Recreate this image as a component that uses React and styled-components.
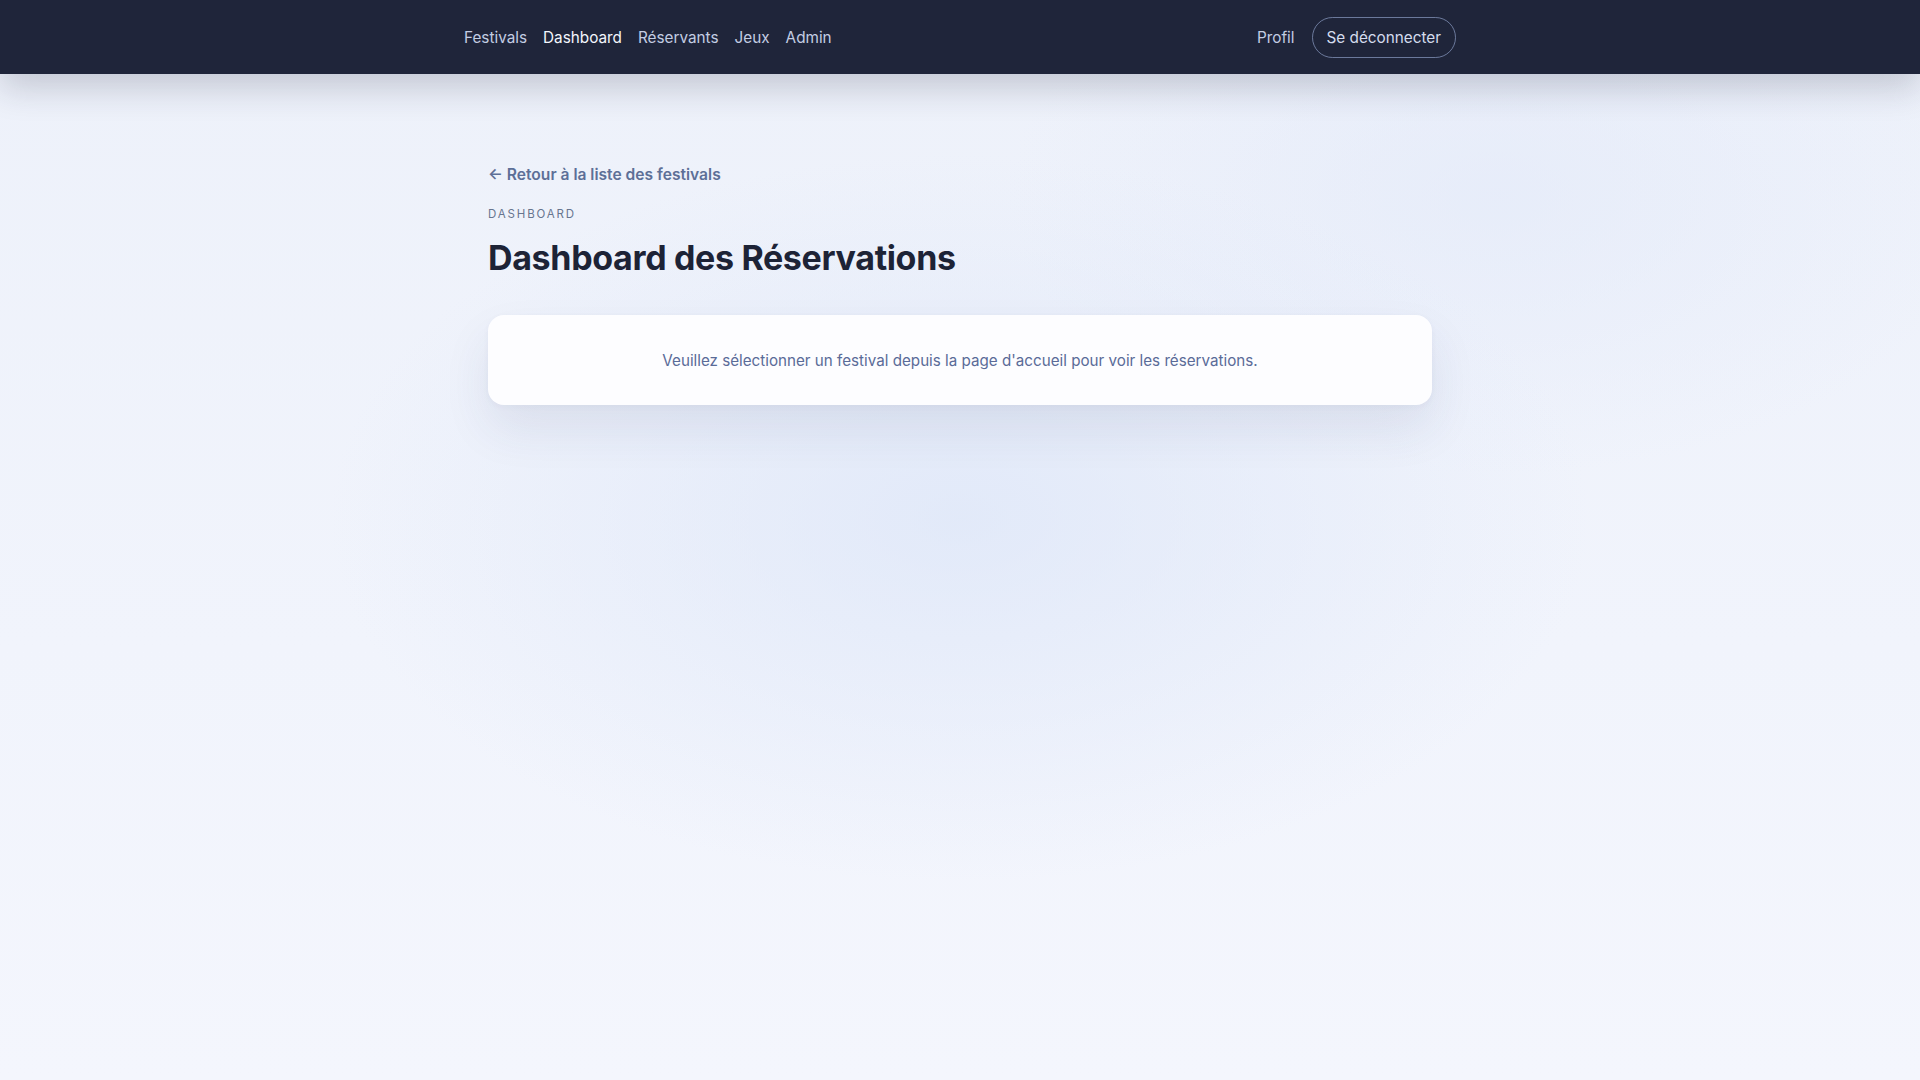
import React from "react";
import styled, { createGlobalStyle } from "styled-components";

const GlobalStyle = createGlobalStyle`
  * { box-sizing: border-box; }
  html, body { margin: 0; padding: 0; }
  body {
    font-family: Inter, "Noto Sans", "Liberation Sans", sans-serif;
    background: #eff3fb;
  }
`;

const Page = styled.div`
  min-height: 100vh;
  background:
    radial-gradient(ellipse 900px 520px at 50% 48%, rgba(221, 230, 248, 0.75), rgba(221, 230, 248, 0) 70%),
    radial-gradient(ellipse 700px 400px at 78% 18%, rgba(226, 233, 249, 0.6), rgba(226, 233, 249, 0) 70%),
    linear-gradient(180deg, #edf1fa 0%, #f1f4fc 60%, #f4f6fd 100%);
`;

const NavBar = styled.nav`
  height: 74px;
  background: #1f253a;
  box-shadow: 0 14px 34px rgba(31, 37, 58, 0.2);
`;

const NavInner = styled.div`
  max-width: 1024px;
  height: 100%;
  margin: 0 auto;
  padding: 0 16px;
  display: flex;
  align-items: center;
  justify-content: space-between;
`;

const NavGroup = styled.div`
  display: flex;
  align-items: center;
  gap: ${(p) => p.$gap || 16}px;
`;

const NavLink = styled.a`
  font-size: 15.3px;
  color: ${(p) => (p.$active ? "#f3f6fc" : "#c3cde3")};
  text-decoration: none;
  cursor: pointer;
`;

const LogoutButton = styled.button`
  height: 41px;
  padding: 0 14px;
  border-radius: 999px;
  border: 1px solid rgba(140, 157, 196, 0.7);
  background: transparent;
  color: #d4dcee;
  font-family: inherit;
  font-size: 15.3px;
  cursor: pointer;
`;

const Main = styled.main`
  max-width: 944px;
  margin: 0 auto;
  padding-top: 90px;
`;

const BackLink = styled.a`
  display: inline-block;
  font-size: 15.6px;
  font-weight: 600;
  line-height: 22px;
  color: #5d6f97;
  text-decoration: none;
  cursor: pointer;
`;

const Eyebrow = styled.div`
  margin-top: 20px;
  font-size: 11.5px;
  line-height: 16px;
  letter-spacing: 0.16em;
  text-transform: uppercase;
  color: #67758f;
`;

const Title = styled.h1`
  margin: 15px 0 0;
  font-size: 34px;
  line-height: 41px;
  font-weight: 700;
  letter-spacing: -0.01em;
  color: #1d2336;
`;

const Card = styled.section`
  margin-top: 37px;
  height: 90px;
  display: flex;
  align-items: center;
  justify-content: center;
  background: #fdfdff;
  border-radius: 16px;
  box-shadow: 0 24px 48px rgba(40, 52, 96, 0.09), 0 2px 6px rgba(40, 52, 96, 0.04);
`;

const CardText = styled.p`
  margin: 0;
  font-size: 15.2px;
  color: #5a6b98;
`;

const links = ["Festivals", "Dashboard", "Réservants", "Jeux", "Admin"];

export default function App() {
  return (
    <>
      <GlobalStyle />
      <Page>
        <NavBar>
          <NavInner>
            <NavGroup>
              {links.map((l) => (
                <NavLink key={l} $active={l === "Dashboard"}>
                  {l}
                </NavLink>
              ))}
            </NavGroup>
            <NavGroup $gap={17}>
              <NavLink>Profil</NavLink>
              <LogoutButton>Se déconnecter</LogoutButton>
            </NavGroup>
          </NavInner>
        </NavBar>
        <Main>
          <BackLink>← Retour à la liste des festivals</BackLink>
          <Eyebrow>Dashboard</Eyebrow>
          <Title>Dashboard des Réservations</Title>
          <Card>
            <CardText>
              Veuillez sélectionner un festival depuis la page d'accueil pour voir les réservations.
            </CardText>
          </Card>
        </Main>
      </Page>
    </>
  );
}
